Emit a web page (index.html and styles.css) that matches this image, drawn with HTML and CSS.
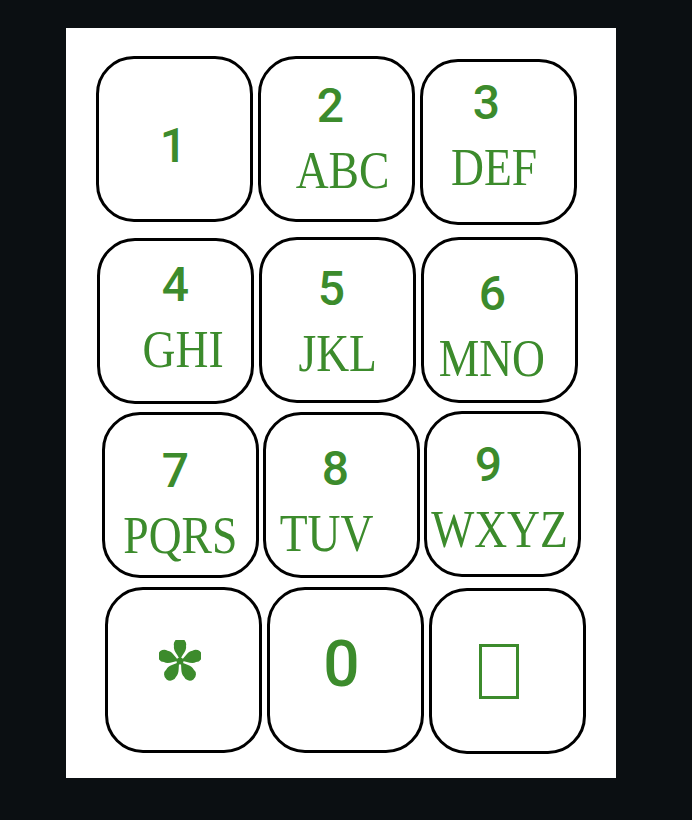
FILE: index.html
```html
<!DOCTYPE html>
<html lang="en">
<head>
<meta charset="utf-8">
<title>Keypad</title>
<link rel="stylesheet" href="styles.css">
</head>
<body>
<div class="panel">
  <div class="row row1">
    <div class="key k1"><span class="digit">1</span></div>
    <div class="key k2"><span class="digit">2</span><span class="letters">ABC</span></div>
    <div class="key k3"><span class="digit">3</span><span class="letters">DEF</span></div>
  </div>
  <div class="row row2">
    <div class="key k4"><span class="digit">4</span><span class="letters">GHI</span></div>
    <div class="key k5"><span class="digit">5</span><span class="letters">JKL</span></div>
    <div class="key k6"><span class="digit">6</span><span class="letters">MNO</span></div>
  </div>
  <div class="row row3">
    <div class="key k7"><span class="digit">7</span><span class="letters">PQRS</span></div>
    <div class="key k8"><span class="digit">8</span><span class="letters">TUV</span></div>
    <div class="key k9"><span class="digit">9</span><span class="letters">WXYZ</span></div>
  </div>
  <div class="row row4">
    <div class="key kstar">
      <svg class="star" width="42" height="42" viewBox="-21 -21 42 42" aria-label="*">
        <g fill="#3c8b2c">
          <circle r="3.5"/>
          <path id="petal" d="M0,-1 C-2,-6 -7,-10 -6,-15 A6.2 6.2 0 1 1 6,-15 C7,-10 2,-6 0,-1 Z"/>
          <path d="M0,-1 C-2,-6 -7,-10 -6,-15 A6.2 6.2 0 1 1 6,-15 C7,-10 2,-6 0,-1 Z" transform="rotate(72)"/>
          <path d="M0,-1 C-2,-6 -7,-10 -6,-15 A6.2 6.2 0 1 1 6,-15 C7,-10 2,-6 0,-1 Z" transform="rotate(144)"/>
          <path d="M0,-1 C-2,-6 -7,-10 -6,-15 A6.2 6.2 0 1 1 6,-15 C7,-10 2,-6 0,-1 Z" transform="rotate(216)"/>
          <path d="M0,-1 C-2,-6 -7,-10 -6,-15 A6.2 6.2 0 1 1 6,-15 C7,-10 2,-6 0,-1 Z" transform="rotate(288)"/>
        </g>
      </svg>
    </div>
    <div class="key k0"><span class="digit zero">0</span></div>
    <div class="key khash"><span class="tofu"></span></div>
  </div>
</div>
</body>
</html>
```
FILE: styles.css
```css
html, body {
  margin: 0;
  padding: 0;
  background: #0b0f12;
}

.panel {
  margin: 28px 0 0 66px;
  width: 550px;
  height: 750px;
  background: #ffffff;
  box-sizing: border-box;
  padding-top: 28px;
  display: flex;
  flex-direction: column;
}

.row {
  display: flex;
  align-items: flex-start;
}

.row1 { padding-left: 30px; gap: 5px; }
.row2 { padding-left: 31px; gap: 5px; margin-top: 13px; }
.row3 { padding-left: 36px; gap: 4px; margin-top: 8px; }
.row4 { padding-left: 39px; gap: 5px; margin-top: 9px; }

.key {
  box-sizing: border-box;
  width: 157px;
  height: 166px;
  border: 3px solid #000;
  border-radius: 38px;
  display: flex;
  flex-direction: column;
  align-items: center;
  justify-content: center;
  gap: 15px;
  color: #3c8b2c;
}

.digit {
  font-family: Roboto, "Liberation Sans", sans-serif;
  font-weight: 500;
  font-size: 48px;
  line-height: 47px;
  translate: var(--dx, 0) var(--dy, 0);
}

.zero {
  font-size: 64px;
  line-height: 64px;
}

.letters {
  font-family: "Liberation Serif", "DejaVu Serif", serif;
  font-size: 53px;
  line-height: 52px;
  display: inline-block;
  transform: scaleX(0.86);
  translate: var(--lx, 0) var(--dy, 0);
}

.k1 { --dx: -1px; --dy: 6px; }
.k2 { --dx: -6px; --lx: 6px; margin-top: 0; }
.k3 { --dx: -12px; --lx: -4px; --dy: -6px; margin-top: 3px; }
.k4 { --dx: 0px; --lx: 8px; --dy: -3px; }
.k5 { --dx: -6px; --lx: 0px; --dy: 2px; margin-top: -1px; }
.k6 { --dx: -7px; --lx: -8px; --dy: 7px; margin-top: -1px; }
.k7 { --dx: -5px; --lx: 0px; --dy: 9px; }
.k8 { --dx: -6px; --lx: -15px; --dy: 7px; }
.k9 { --dx: -14px; --lx: -3px; --dy: 4px; margin-top: -1px; }

.kstar .star { translate: -4px -9px; }
.k0 { --dx: -4px; --dy: -5px; }
.khash { margin-top: 1px; }

.tofu {
  box-sizing: border-box;
  width: 40px;
  height: 55px;
  border: 3px solid #3c8b2c;
  translate: -9px 0;
}
```
